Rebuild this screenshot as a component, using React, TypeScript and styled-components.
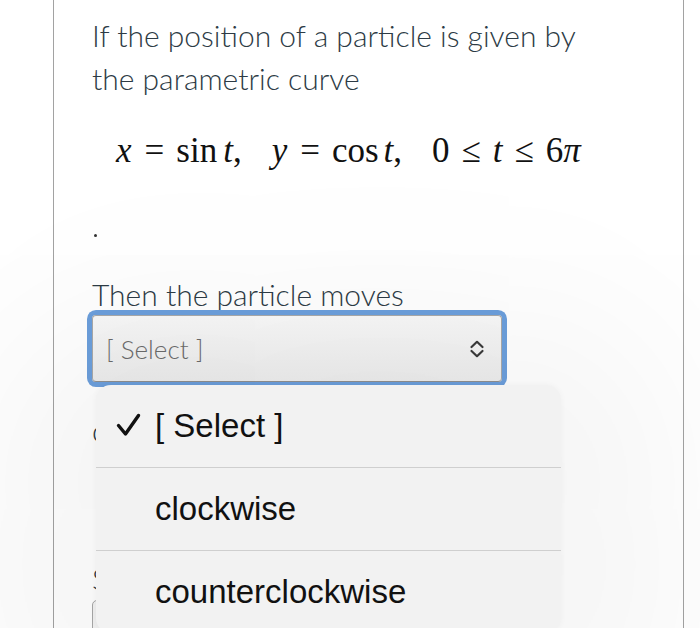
import React from "react";
import styled, { createGlobalStyle } from "styled-components";

const GlobalStyle = createGlobalStyle`
  html, body {
    margin: 0;
    padding: 0;
    background: #ffffff;
    overflow: hidden;
  }
  body {
    width: 700px;
    height: 628px;
  }
`;

const Page = styled.div`
  width: 700px;
  height: 628px;
  overflow: hidden;
  background: #ffffff;
`;

const Column = styled.div`
  margin-left: 53px;
  width: 591px;
  height: 628px;
  border-left: 1.5px solid #a2a2a2;
  border-right: 1.5px solid #a2a2a2;
  padding: 14px 0 0 38px;
  box-sizing: content-box;
`;

const Paragraph = styled.p<{ $top?: number }>`
  margin: ${(p) => p.$top ?? 0}px 0 0 0;
  font-family: Lato, "Open Sans", sans-serif;
  font-weight: 300;
  font-size: 30px;
  line-height: 43px;
  color: #2d3b45;
  white-space: nowrap;
`;

const MathLine = styled.div`
  margin: 29px 0 0 24px;
  height: 44px;
  display: flex;
  align-items: baseline;
  font-family: "Liberation Serif", "Times New Roman", serif;
  font-size: 35px;
  line-height: 44px;
  color: #111;
  white-space: pre;
`;

const MVar = styled.span`
  font-style: italic;
`;

const MOp = styled.span<{ $l?: number; $r?: number }>`
  margin-left: ${(p) => p.$l ?? 0}px;
  margin-right: ${(p) => p.$r ?? 0}px;
`;

const Gap = styled.span<{ $w: number }>`
  display: inline-block;
  width: ${(p) => p.$w}px;
`;

const Dot = styled.div`
  margin: 61px 0 0 2px;
  width: 3px;
  height: 3px;
  border-radius: 50%;
  background: #333;
`;

const SelectWrap = styled.div`
  position: relative;
  margin-top: -1px;
  width: 410px;
`;

const SelectBox = styled.div`
  height: 67px;
  box-sizing: border-box;
  border: 1px solid #a9a9a9;
  border-bottom-color: #8f8f8f;
  border-radius: 4px;
  background: linear-gradient(#f8f8f8, #ececec);
  box-shadow: 0 0 0 5px #6c9fdc;
  display: flex;
  align-items: center;
  justify-content: space-between;
  padding: 0 16px 0 13px;
  font-family: Lato, "Open Sans", sans-serif;
  font-weight: 300;
  font-size: 26px;
  color: #6b6b6b;
`;

const Popover = styled.div`
  position: absolute;
  left: 4px;
  top: 70px;
  width: 465px;
  border-radius: 15px;
  background: #f2f2f2;
  box-shadow: 0 30px 220px 90px rgba(0, 0, 0, 0.055), 0 0 6px rgba(0, 0, 0, 0.04);
  overflow: hidden;
  z-index: 2;
`;

const Option = styled.div<{ $last?: boolean }>`
  height: 82px;
  display: flex;
  align-items: center;
  border-bottom: ${(p) => (p.$last ? "none" : "1px solid #cfcfcf")};
  font-family: "Liberation Sans", Arial, sans-serif;
  font-size: 33px;
  color: #111;
`;

const CheckSlot = styled.span`
  width: 59px;
  display: flex;
  justify-content: flex-end;
  padding-right: 14px;
  box-sizing: border-box;
  margin-top: -2px;
`;

const Beneath = styled.div`
  font-family: Lato, "Open Sans", sans-serif;
  font-weight: 300;
  font-size: 30px;
  line-height: 43px;
  color: #2d3b45;
`;

const BeneathLine = styled.div<{ $top: number }>`
  margin-top: ${(p) => p.$top}px;
`;

const BeneathSelect = styled.div`
  margin-top: 0px;
  width: 410px;
  height: 60px;
  border: 1px solid #a9a9a9;
  border-radius: 5px;
  background: #f4f4f4;
`;

const Chevrons = () => (
  <svg width="16" height="20" viewBox="0 0 16 20" fill="none">
    <path d="M2.5 8 L8 2.8 L13.5 8" stroke="#3a3a3a" strokeWidth="2.2" strokeLinecap="round" strokeLinejoin="round" />
    <path d="M2.5 12 L8 17.2 L13.5 12" stroke="#3a3a3a" strokeWidth="2.2" strokeLinecap="round" strokeLinejoin="round" />
  </svg>
);

const Check = () => (
  <svg width="25" height="24" viewBox="0 0 25 24" fill="none">
    <path d="M2.5 12.5 L9.5 21 L22.5 2.5" stroke="#111" strokeWidth="3.4" strokeLinecap="round" strokeLinejoin="round" />
  </svg>
);

const options = ["[ Select ]", "clockwise", "counterclockwise"];

export default function App() {
  return (
    <Page>
      <GlobalStyle />
      <Column>
        <Paragraph>
          If the position of a particle is given by
          <br />
          the parametric curve
        </Paragraph>
        <MathLine>
          <MVar>x</MVar>
          <MOp $l={13} $r={12}>=</MOp>
          <span>sin</span>
          <Gap $w={6} />
          <MVar>t</MVar>
          <span>,</span>
          <Gap $w={30} />
          <MVar>y</MVar>
          <MOp $l={13} $r={12}>=</MOp>
          <span>cos</span>
          <Gap $w={5} />
          <MVar>t</MVar>
          <span>,</span>
          <Gap $w={30} />
          <span>0</span>
          <MOp $l={12} $r={12}>≤</MOp>
          <MVar>t</MVar>
          <MOp $l={12} $r={12}>≤</MOp>
          <span>6</span>
          <MVar>π</MVar>
        </MathLine>
        <Dot />
        <Paragraph $top={36}>Then the particle moves</Paragraph>
        <SelectWrap>
          <SelectBox>
            <span>[ Select ]</span>
            <Chevrons />
          </SelectBox>
          <Popover>
            {options.map((o, i) => (
              <Option key={o} $last={i === options.length - 1}>
                <CheckSlot>{i === 0 ? <Check /> : null}</CheckSlot>
                <span>{o}</span>
              </Option>
            ))}
          </Popover>
        </SelectWrap>
        <Beneath>
          <BeneathLine $top={27}>completing one cycle.</BeneathLine>
          <BeneathLine $top={105}>So the particle travels</BeneathLine>
          <BeneathSelect />
        </Beneath>
      </Column>
    </Page>
  );
}
